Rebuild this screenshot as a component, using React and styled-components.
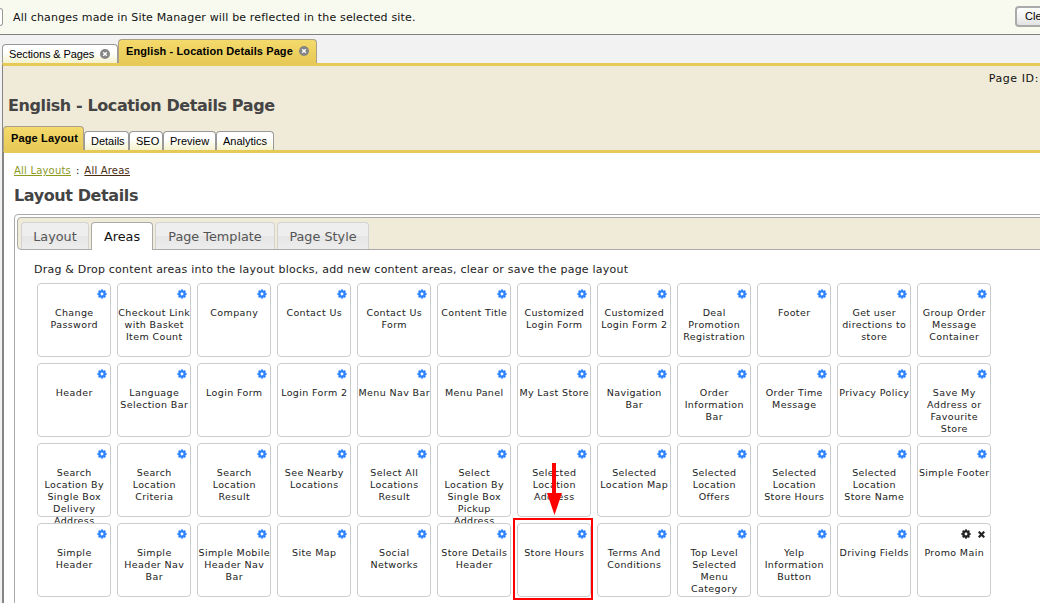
import React from "react";
import styled, { createGlobalStyle, css } from "styled-components";

const Global = createGlobalStyle`
  * { box-sizing: border-box; }
  html, body { margin: 0; height: 603px; overflow: hidden; background: #f2f2f2; }
  body { font-family: Verdana, "DejaVu Sans", sans-serif; color: #111; }
`;
const Page = styled.div`
  width: 1040px; height: 603px; overflow: hidden;
  display: flex; flex-direction: column; white-space: nowrap;
`;
const Notice = styled.header`
  height: 35px; flex: none; background: #f8faf0; border-bottom: 1px solid #808080;
  display: flex; align-items: center; justify-content: space-between;
`;
const Message = styled.div`
  display: flex; align-items: center; gap: 10px; height: 34px;
`;
const FieldEdge = styled.span`
  width: 3px; height: 18px; border: 1px solid #999; border-left: 0;
  border-radius: 0 3px 3px 0; background: #fff;
`;
const Txt = styled.span`
  font-size: ${(p) => p.$size || 12}px;
  letter-spacing: ${(p) => p.$ls || 0}px;
`;
const ClearButton = styled.button`
  width: 60px; height: 21px; margin: -2px -35px 0 0; padding: 0 0 0 8px;
  text-align: left; border: 2px solid #aaa; border-radius: 4px;
  background: linear-gradient(#fff, #f3f3f3 50%, #e2e2e2);
  font: 11px/17px "Liberation Sans", Arial, sans-serif; color: #000;
`;
const TabRow = styled.nav`
  display: flex; align-items: flex-end; flex: none;
  height: ${(p) => p.$h}px; padding-left: ${(p) => p.$left}px;
`;
const Tab = styled.div`
  width: ${(p) => p.$w}px; height: 19px; padding-left: 6px;
  display: flex; align-items: center; gap: 6px;
  border: 1px solid #999; border-bottom: 0;
  border-radius: 4px 4px 0 0; color: #000;
  background: linear-gradient(#fff 40%, #f4f2cc);
  font: 11px "Liberation Sans", Arial, sans-serif;
  letter-spacing: ${(p) => p.$ls || 0}px;
  ${(p) => p.$active && css`
    height: 24px; font-weight: bold; padding: 0 0 2px 7px;
    background: linear-gradient(#f4da6c, #e7c956);
    border-color: #aaa08a;
  `}
`;
const Frame = styled.main`
  margin-left: 2px; border-left: 1px solid #858585; flex: 1; min-height: 0;
  border-top: 3px solid #e6ca57; display: flex; flex-direction: column;
  background: #f0ead8;
`;
const PageId = styled.div`
  height: 29px; padding: 4px 1px 0 0; text-align: right; line-height: 14px;
`;
const Title = styled.h1`
  margin: 0; font-size: 16px; line-height: 22px; color: #444;
  letter-spacing: -0.4px; padding-left: ${(p) => p.$left || 0}px;
`;
const Body = styled.section`
  flex: 1; min-height: 0; background: #fff; border-top: 3px solid #e6ca57;
  border-left: 1px solid #858585; padding: 10px 0 0 10px;
`;
const Crumbs = styled.div`
  height: 22px; line-height: 16px; display: flex; gap: 5px; color: #111;
`;
const Crumb = styled.a`
  font-size: 10px; letter-spacing: 0.2px; color: ${(p) => p.$c};
  text-decoration: underline; text-underline-offset: 1px;
`;
const Panel = styled.div`
  margin: 7px -5px 0 0; height: 420px; border: 1px solid #aaa;
  border-radius: 4px 0 0 0; padding: 2px 0 0 2px;
`;
const PanelTabs = styled.div`
  height: 33px; background: #f0ead8; border: 1px solid #aaa;
  border-radius: 4px 0 0 4px; display: flex; align-items: flex-end; gap: 2px;
  padding-left: 3px;
`;
const PanelTab = styled.div`
  width: ${(p) => p.$w}px; height: 27px; display: flex; align-items: center;
  justify-content: center; border: 1px solid #d3d3d3; border-bottom: 0;
  border-radius: 4px 4px 0 0; color: #555; font-size: 12.8px; padding-top: 1px;
  background: linear-gradient(#eeeeee 48%, #e5e5e5 50%, #ededed);
  ${(p) => p.$active && css`
    height: 28px; margin-bottom: -1px; padding: 0 0 1px; background: #fff; border-color: #aaa; color: #111;
  `}
`;
const Hint = styled.p`
  margin: 12px 0 0 17px; height: 14px; line-height: 15px; font-size: 11px;
  letter-spacing: 0.215px; color: #222;
`;
const Grid = styled.div`
  display: grid; grid-template-columns: repeat(12, 74px); grid-auto-rows: 74px;
  gap: 6px; margin: 7px 0 0 20px;
`;
const Card = styled.div`
  position: relative; border: 1px solid #ccc; border-radius: 4px; background: #fff;
`;
const IconLine = styled.div`
  height: 23px; padding: 5px ${(p) => (p.$custom ? 5 : 3)}px 0 0;
  display: flex; justify-content: flex-end; gap: 7px;
`;
const Label = styled.div`
  display: flex; flex-direction: column; align-items: center; margin: 0 -6.5px 0 -6px;
  font-size: 9.5px; line-height: 12px; letter-spacing: 0.38px; color: #222;
`;
const Highlight = styled.div`
  position: absolute; left: -5px; top: -6px; width: 80px; height: 82px;
  border: 2px solid #f00; z-index: 3;
`;
const ArrowMark = styled.svg`
  position: absolute; left: 28px; top: -61px; z-index: 3;
`;
const Glyph = styled.svg`
  flex: none; display: block; margin-top: ${(p) => p.$top || 0}px;
`;

function Gear({ color }) {
  return (
    <Glyph width="10" height="10" viewBox="-5 -5 10 10">
      <circle r="2.6" fill="none" stroke={color} strokeWidth="2.3" />
      {[0, 45, 90, 135, 180, 225, 270, 315].map((a) => (
        <rect key={a} x="-0.85" y="-4.7" width="1.7" height="2" fill={color} transform={`rotate(${a})`} />
      ))}
    </Glyph>
  );
}
function Cross() {
  return (
    <Glyph $top={2} width="7" height="7" viewBox="0 0 7 7">
      <path d="M.7.7 6.3 6.3M6.3.7.7 6.3" stroke="#222" strokeWidth="2.2" />
    </Glyph>
  );
}
function Close() {
  return (
    <svg width="10" height="10" viewBox="0 0 10 10">
      <circle cx="5" cy="5" r="5" fill="#858585" />
      <path d="M3.2 3.2 6.8 6.8M6.8 3.2 3.2 6.8" stroke="#fff" strokeWidth="1.4" />
    </svg>
  );
}

const areas = [
  "Change|Password", "Checkout Link|with Basket|Item Count", "Company", "Contact Us", "Contact Us|Form", "Content Title",
  "Customized|Login Form", "Customized|Login Form 2", "Deal|Promotion|Registration", "Footer", "Get user|directions to|store", "Group Order|Message|Container",
  "Header", "Language|Selection Bar", "Login Form", "Login Form 2", "Menu Nav Bar", "Menu Panel",
  "My Last Store", "Navigation|Bar", "Order|Information|Bar", "Order Time|Message", "Privacy Policy", "Save My|Address or|Favourite|Store",
  "Search|Location By|Single Box|Delivery|Address", "Search|Location|Criteria", "Search|Location|Result", "See Nearby|Locations", "Select All|Locations|Result", "Select|Location By|Single Box|Pickup|Address",
  "Selected|Location|Address", "Selected|Location Map", "Selected|Location|Offers", "Selected|Location|Store Hours", "Selected|Location|Store Name", "Simple Footer",
  "Simple|Header", "Simple|Header Nav|Bar", "Simple Mobile|Header Nav|Bar", "Site Map", "Social|Networks", "Store Details|Header",
  "Store Hours", "Terms And|Conditions", "Top Level|Selected|Menu|Category", "Yelp|Information|Button", "Driving Fields", "Promo Main",
];

function Area({ name }) {
  const custom = name === "Promo Main";
  return (
    <Card>
      <IconLine $custom={custom}>
        <Gear color={custom ? "#222" : "#2e83ff"} />
        {custom && <Cross />}
      </IconLine>
      <Label>{name.split("|").map((l) => <span key={l}>{l}</span>)}</Label>
      {name === "Store Hours" && (
        <>
          <Highlight />
          <ArrowMark width="17" height="54" viewBox="0 0 17 54">
            <path d="M6 0H10V30H16L8.5 52 1 30H6Z" fill="#f00" />
          </ArrowMark>
        </>
      )}
    </Card>
  );
}

export default function App() {
  return (
    <Page>
      <Global />
      <Notice>
        <Message>
          <FieldEdge />
          <Txt $size={11} $ls={0.16}>All changes made in Site Manager will be reflected in the selected site.</Txt>
        </Message>
        <ClearButton>Clear</ClearButton>
      </Notice>
      <TabRow $h={28} $left={2}>
        <Tab $w={116} $ls={-0.1}>Sections &amp; Pages <Close /></Tab>
        <Tab $w={199} $ls={0.1} $active>English - Location Details Page <Close /></Tab>
      </TabRow>
      <Frame>
        <PageId><Txt $size={11} $ls={0.6}>Page ID:</Txt></PageId>
        <Title $left={5}>English - Location Details Page</Title>
        <TabRow $h={33} $left={0}>
          <Tab $w={81} $ls={0.15} $active>Page Layout</Tab>
          <Tab $w={45}>Details</Tab>
          <Tab $w={34}>SEO</Tab>
          <Tab $w={53}>Preview</Tab>
          <Tab $w={58}>Analytics</Tab>
        </TabRow>
        <Body>
          <Crumbs>
            <Crumb $c="#8c9a1e">All Layouts</Crumb>
            <Txt $size={10}>:</Txt>
            <Crumb $c="#4a2c12">All Areas</Crumb>
          </Crumbs>
          <Title as="h2">Layout Details</Title>
          <Panel>
            <PanelTabs>
              <PanelTab $w={68}>Layout</PanelTab>
              <PanelTab $w={62} $active>Areas</PanelTab>
              <PanelTab $w={120}>Page Template</PanelTab>
              <PanelTab $w={92}>Page Style</PanelTab>
            </PanelTabs>
            <Hint>Drag &amp; Drop content areas into the layout blocks, add new content areas, clear or save the page layout</Hint>
            <Grid>{areas.map((a) => <Area key={a} name={a} />)}</Grid>
          </Panel>
        </Body>
      </Frame>
    </Page>
  );
}
